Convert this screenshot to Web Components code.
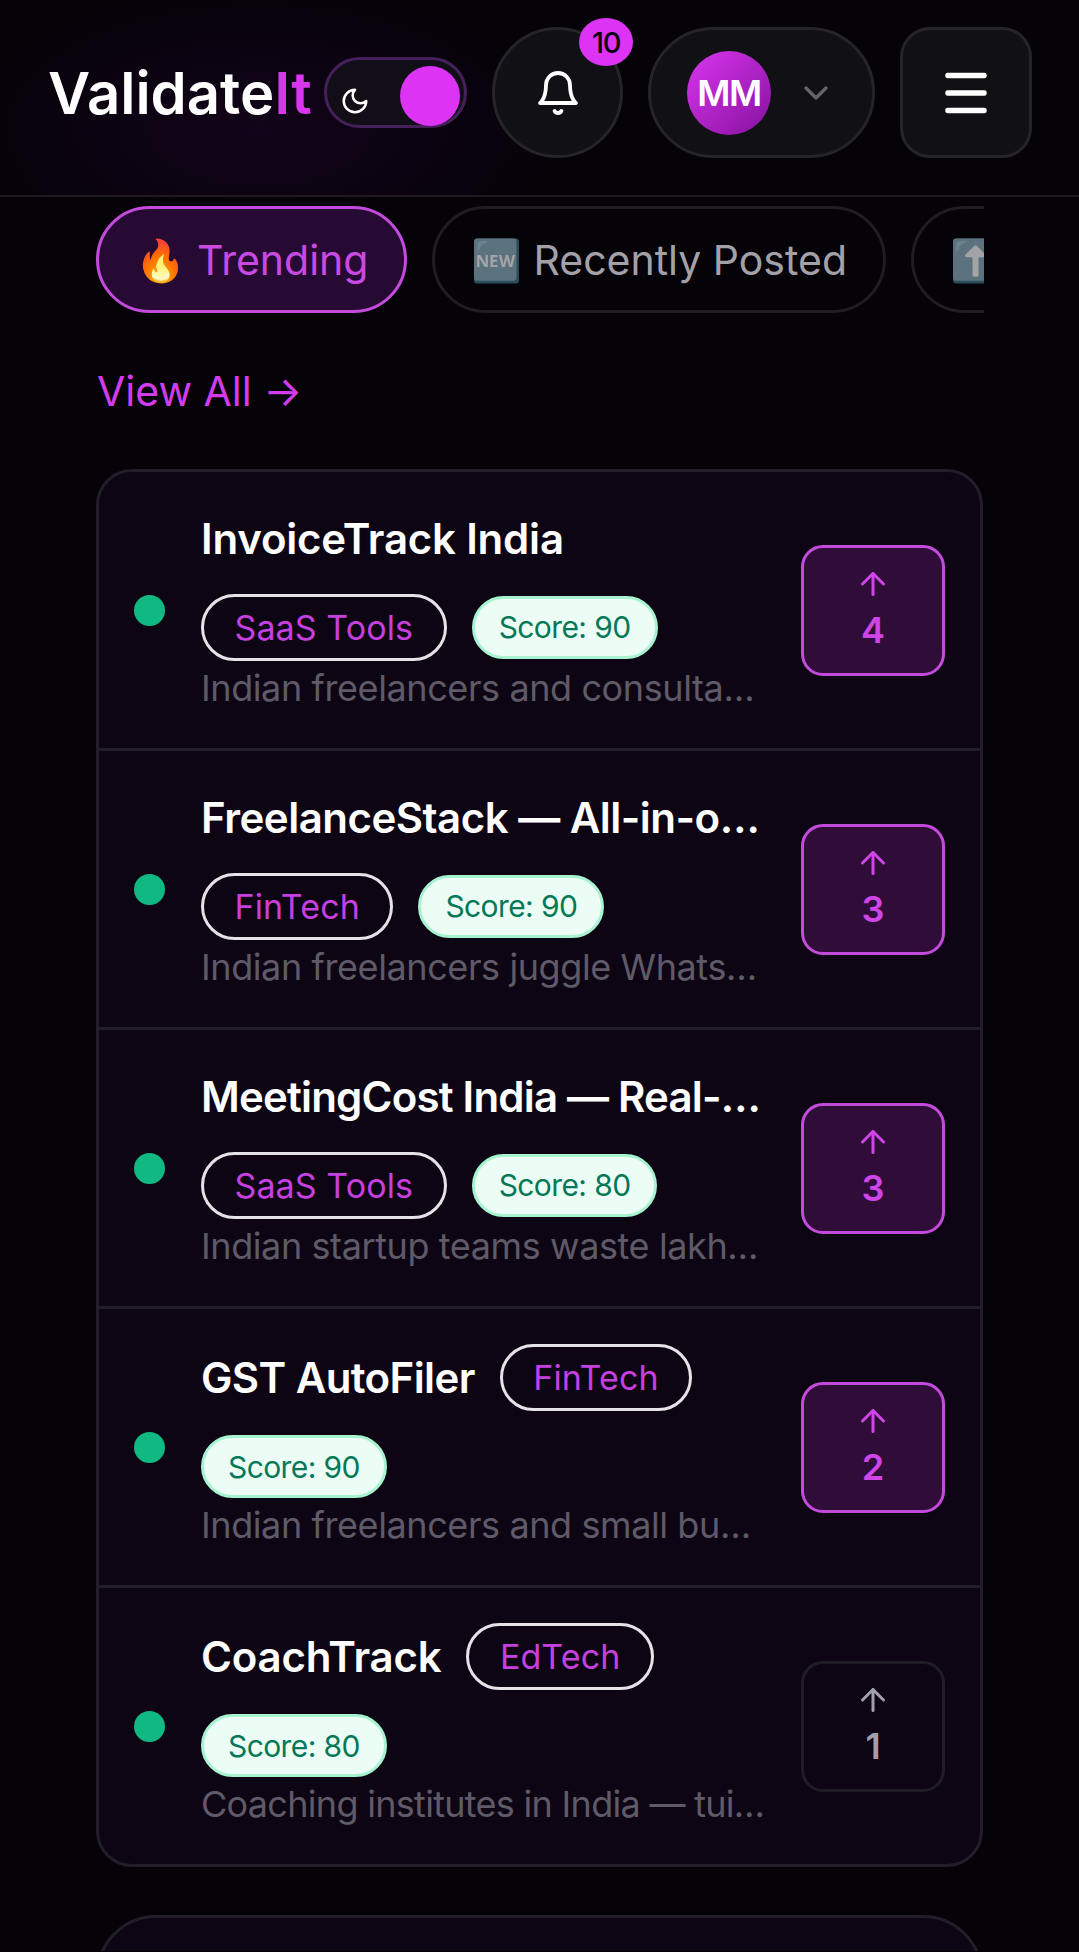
<!DOCTYPE html>
<html>
<head>
<meta charset="utf-8">
<style>
  html, body { margin: 0; height: 1952px; overflow: hidden; background: #050208; }
  body { font-family: Inter, "Noto Sans", sans-serif; color: #fff; }
  .fold { height: 36px; overflow: hidden; }
</style>
</head>
<body>
<app-header></app-header>
<filter-tabs></filter-tabs>
<view-all></view-all>
<idea-card>
  <idea-row name="InvoiceTrack India" tag="SaaS Tools" score="90" votes="4" voted desc="Indian freelancers and consulta…"></idea-row>
  <idea-row style="--name-spacing: -0.5px" name="FreelanceStack — All-in-o…" tag="FinTech" score="90" votes="3" voted desc="Indian freelancers juggle Whats…"></idea-row>
  <idea-row style="--name-spacing: -0.8px" name="MeetingCost India — Real-…" tag="SaaS Tools" score="80" votes="3" voted desc="Indian startup teams waste lakh…"></idea-row>
  <idea-row style="--name-spacing: -0.6px" name="GST AutoFiler" tag="FinTech" score="90" votes="2" voted desc="Indian freelancers and small bu…"></idea-row>
  <idea-row name="CoachTrack" tag="EdTech" score="80" votes="1" last desc="Coaching institutes in India — tui…"></idea-row>
</idea-card>
<div class="fold"><idea-card style="--radius: 66px; height: 120px"></idea-card></div>

<script>
class AppHeader extends HTMLElement {
  constructor() {
    super();
    this.shadowDOM = this.attachShadow({ mode: 'open' });
    this.render();
  }

  render() {
    this.shadowDOM.innerHTML = `
      <style>
      :host {
        display: flex;
        align-items: center;
        box-sizing: border-box;
        height: 197px;
        padding: 0 47px 10px 48px;
        border-bottom: 2px solid #1d1a22;
        background: radial-gradient(ellipse 300px 150px at 260px 130px, #12041a, transparent);
      }
      .logo {
        font-size: 58px;
        font-weight: 600;
        width: 264px;
        flex: none;
        white-space: nowrap;
      }
      .logo span { color: #d936ef; }
      .toggle {
        box-sizing: border-box;
        width: 143px;
        height: 71px;
        margin-left: 12px;
        flex: none;
        display: flex;
        align-items: center;
        justify-content: space-between;
        padding: 0 4px 0 13px;
        border: 3px solid #45205a;
        border-radius: 36px;
        background: #120e17;
      }
      .toggle svg { margin-top: 16px; }
      .knob { width: 60px; height: 60px; margin-top: 6px; border-radius: 50%; background: #dd33f5; }
      .btn {
        box-sizing: border-box;
        height: 131px;
        flex: none;
        margin-left: 25px;
        display: flex;
        align-items: center;
        border: 3px solid #26242b;
        background: #111014;
        position: relative;
      }
      .bell { width: 131px; border-radius: 50%; justify-content: center; }
      .badge {
        position: absolute;
        top: -12px;
        left: 84px;
        width: 54px;
        height: 48px;
        border-radius: 50%;
        background: #dd33f5;
        color: #0b0410;
        font-size: 29px;
        font-weight: 500;
        letter-spacing: -1.5px;
        display: flex;
        align-items: center;
        justify-content: center;
      }
      .user { width: 227px; border-radius: 66px; padding-left: 36px; }
      .avatar {
        width: 84px;
        height: 84px;
        border-radius: 50%;
        background: linear-gradient(135deg, #d936ef, #86119e);
        font-size: 36px;
        font-weight: 600;
        letter-spacing: -1.5px;
        display: flex;
        align-items: center;
        justify-content: center;
      }
      .chev { margin-left: 25px; }
      .menu { width: 132px; border-radius: 30px; justify-content: center; }
      </style>
      <div class="logo">Validate<span>It</span></div>
      <div class="toggle">
        <svg width="30" height="30" viewBox="0 0 24 24" fill="none" stroke="#fff" stroke-width="2" stroke-linecap="round" stroke-linejoin="round"><path d="M12 3a6 6 0 0 0 9 9 9 9 0 1 1-9-9Z"/></svg>
        <div class="knob"></div>
      </div>
      <div class="btn bell">
        <svg width="48" height="48" viewBox="0 0 24 24" fill="none" stroke="#fff" stroke-width="1.9" stroke-linecap="round" stroke-linejoin="round"><path d="M6 8a6 6 0 0 1 12 0c0 7 3 9 3 9H3s3-2 3-9"/><path d="M10.3 21a1.94 1.94 0 0 0 3.4 0"/></svg>
        <div class="badge">10</div>
      </div>
      <div class="btn user">
        <div class="avatar">MM</div>
        <svg class="chev" width="40" height="40" viewBox="0 0 24 24" fill="none" stroke="#66636b" stroke-width="2" stroke-linecap="round" stroke-linejoin="round"><path d="m6 9 6 6 6-6"/></svg>
      </div>
      <div class="btn menu">
        <svg width="56" height="56" viewBox="0 0 24 24" fill="none" stroke="#fff" stroke-width="2.3" stroke-linecap="round"><path d="M3 5h18M3 12.5h18M3 20h18" transform="translate(1.5 -0.5) scale(.875 1)"/></svg>
      </div>
    `;
  }
}

class FilterTabs extends HTMLElement {
  constructor() {
    super();
    this.shadowDOM = this.attachShadow({ mode: 'open' });
    this.render();
  }

  render() {
    this.shadowDOM.innerHTML = `
      <style>
      :host {
        display: flex;
        gap: 25px;
        margin: 9px 95px 0 96px;
        overflow: hidden;
      }
      .tab {
        box-sizing: border-box;
        flex: none;
        height: 107px;
        display: flex;
        align-items: center;
        gap: 11px;
        padding: 0 36px;
        border: 3px solid #1f1c24;
        border-radius: 54px;
        color: #a3a1a8;
        font-size: 41px;
        white-space: nowrap;
      }
      .tab .emoji { opacity: .65; }
      .tab.on {
        background: #270a33;
        border-color: #c34bdc;
        color: #c94ae3;
      }
      .tab.on .emoji { opacity: 1; }
      .tab.more { width: 300px; }
      </style>
      <div class="tab on"><span class="emoji">🔥</span><span>Trending</span></div>
      <div class="tab"><span class="emoji">🆕</span><span>Recently Posted</span></div>
      <div class="tab more"><span class="emoji">⬆️</span></div>
    `;
  }
}

class ViewAll extends HTMLElement {
  constructor() {
    super();
    this.attachShadow({ mode: 'open' }).innerHTML = `
      <style>
      :host {
        display: block;
        margin: 53px 0 53px 97px;
        height: 50px;
        line-height: 50px;
        font-size: 41px;
        color: #d33cec;
      }
      </style>
      View All →
    `;
  }
}

class IdeaCard extends HTMLElement {
  constructor() {
    super();
    this.attachShadow({ mode: 'open' }).innerHTML = `
      <style>
      :host {
        display: block;
        box-sizing: border-box;
        margin: 0 96px 48px;
        border: 3px solid #221d2a;
        border-radius: var(--radius, 36px);
        background: #0d0513;
        overflow: hidden;
      }
      </style>
      <slot></slot>
    `;
  }
}

class IdeaRow extends HTMLElement {
  constructor() {
    super();
    this.shadowDOM = this.attachShadow({ mode: 'open' });
  }

  connectedCallback() {
    this.render();
  }

  render() {
    const attr = (n) => this.getAttribute(n);
    this.shadowDOM.innerHTML = `
      <style>
      :host {
        display: flex;
        align-items: center;
        gap: 36px;
        box-sizing: border-box;
        height: 279px;
        padding: 0 35px;
        border-bottom: 3px solid #221d2a;
      }
      :host([last]) { border-bottom: 0; height: 276px; }
      .dot { flex: none; width: 31px; height: 31px; border-radius: 50%; background: #10b981; }
      .info { flex: 1; min-width: 0; padding-top: 2px; }
      .head { display: flex; flex-wrap: wrap; align-items: center; gap: 24px 25px; }
      .name {
        max-width: 100%;
        line-height: 62px;
        font-size: 42px;
        font-weight: 600;
        letter-spacing: var(--name-spacing, -0.2px);
        white-space: nowrap;
      }
      .tag {
        box-sizing: border-box;
        height: 67px;
        display: flex;
        align-items: center;
        padding: 0 30.5px;
        border: 3px solid #e5e3e8;
        border-radius: 34px;
        color: #c63fdf;
        font-size: 34px;
        letter-spacing: 0.1px;
        white-space: nowrap;
      }
      .score {
        box-sizing: border-box;
        height: 63px;
        display: flex;
        align-items: center;
        padding: 0 24px;
        border: 3px solid #a7f3d0;
        border-radius: 32px;
        background: #ecfdf5;
        color: #047857;
        font-size: 30px;
        letter-spacing: -0.6px;
        white-space: nowrap;
      }
      .desc {
        line-height: 54px;
        font-size: 36px;
        letter-spacing: -0.4px;
        color: #5f5a68;
        white-space: nowrap;
      }
      :host([last]) .desc { letter-spacing: -0.7px; }
      .vote {
        box-sizing: border-box;
        flex: none;
        width: 144px;
        height: 131px;
        padding-bottom: 3px;
        display: flex;
        flex-direction: column;
        align-items: center;
        justify-content: center;
        gap: 6px;
        border: 3px solid #1f1c26;
        border-radius: 22px;
        color: #a1a0a8;
        font-size: 36px;
        font-weight: 600;
      }
      :host([voted]) .vote {
        background: #2f0d38;
        border-color: #c34bdc;
        color: #cf45e8;
      }
      </style>
      <div class="dot"></div>
      <div class="info">
        <div class="head">
          <div class="name">${attr('name')}</div>
          <div class="tag">${attr('tag')}</div>
          <div class="score">Score: ${attr('score')}</div>
        </div>
        <div class="desc">${attr('desc')}</div>
      </div>
      <div class="vote">
        <svg width="36" height="36" viewBox="0 0 24 24" fill="none" stroke="currentColor" stroke-width="2" stroke-linecap="round" stroke-linejoin="round"><path d="m5 12 7-7 7 7"/><path d="M12 19V5"/></svg>
        <span>${attr('votes')}</span>
      </div>
    `;
  }
}

customElements.define('app-header', AppHeader);
customElements.define('filter-tabs', FilterTabs);
customElements.define('view-all', ViewAll);
customElements.define('idea-card', IdeaCard);
customElements.define('idea-row', IdeaRow);
</script>
</body>
</html>
